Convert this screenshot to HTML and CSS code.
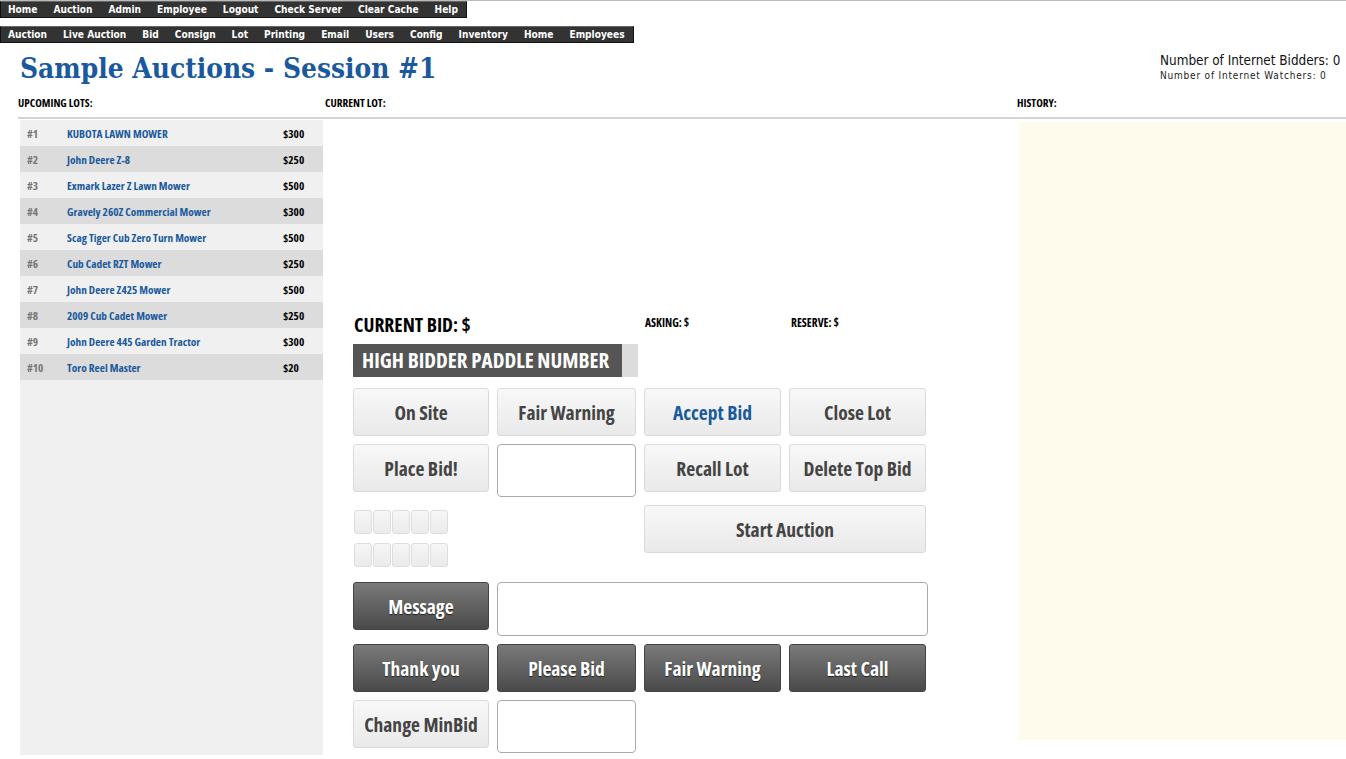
FILE: index.html
```html
<!DOCTYPE html>
<html>
<head>
<meta charset="utf-8">
<link rel="stylesheet" href="styles.css">
</head>
<body>
<div class="topline"></div>
<nav class="menu menu1">
  <a>Home</a><a>Auction</a><a>Admin</a><a>Employee</a><a>Logout</a><a>Check Server</a><a>Clear Cache</a><a>Help</a>
</nav>
<nav class="menu menu2">
  <a>Auction</a><a>Live Auction</a><a>Bid</a><a>Consign</a><a>Lot</a><a>Printing</a><a>Email</a><a>Users</a><a>Config</a><a>Inventory</a><a>Home</a><a>Employees</a>
</nav>
<header class="head">
  <h1 class="title">Sample Auctions - Session #1</h1>
  <div class="stats">
    <div class="bidders">Number of Internet Bidders: 0</div>
    <div class="watchers">Number of Internet Watchers: 0</div>
  </div>
</header>
<div class="labels">
  <div class="lbl lbl-left">UPCOMING LOTS:</div>
  <div class="lbl lbl-mid">CURRENT LOT:</div>
  <div class="lbl lbl-right">HISTORY:</div>
</div>
<main class="cols">
  <section class="lots">
    <div class="lot"><span class="num">#1</span><span class="name">KUBOTA LAWN MOWER</span><span class="price">$300</span></div>
    <div class="lot"><span class="num">#2</span><span class="name">John Deere Z-8</span><span class="price">$250</span></div>
    <div class="lot"><span class="num">#3</span><span class="name">Exmark Lazer Z Lawn Mower</span><span class="price">$500</span></div>
    <div class="lot"><span class="num">#4</span><span class="name">Gravely 260Z Commercial Mower</span><span class="price">$300</span></div>
    <div class="lot"><span class="num">#5</span><span class="name">Scag Tiger Cub Zero Turn Mower</span><span class="price">$500</span></div>
    <div class="lot"><span class="num">#6</span><span class="name">Cub Cadet RZT Mower</span><span class="price">$250</span></div>
    <div class="lot"><span class="num">#7</span><span class="name">John Deere Z425 Mower</span><span class="price">$500</span></div>
    <div class="lot"><span class="num">#8</span><span class="name">2009 Cub Cadet Mower</span><span class="price">$250</span></div>
    <div class="lot"><span class="num">#9</span><span class="name">John Deere 445 Garden Tractor</span><span class="price">$300</span></div>
    <div class="lot"><span class="num">#10</span><span class="name">Toro Reel Master</span><span class="price">$20</span></div>
  </section>
  <section class="current">
    <div class="lotview"></div>
    <div class="bidline">
      <div class="curbid">CURRENT BID: $</div>
      <div class="small asking">ASKING: $</div>
      <div class="small reserve">RESERVE: $</div>
    </div>
    <div class="paddle"><span class="paddle-txt">HIGH BIDDER PADDLE NUMBER</span></div>
    <div class="grid">
      <button class="btn">On Site</button>
      <button class="btn">Fair Warning</button>
      <button class="btn blue">Accept Bid</button>
      <button class="btn">Close Lot</button>

      <button class="btn">Place Bid!</button>
      <input class="field" type="text">
      <button class="btn">Recall Lot</button>
      <button class="btn">Delete Top Bid</button>

      <div class="keys">
        <div class="keyrow"><span class="key"></span><span class="key"></span><span class="key"></span><span class="key"></span><span class="key"></span></div>
        <div class="keyrow"><span class="key"></span><span class="key"></span><span class="key"></span><span class="key"></span><span class="key"></span></div>
      </div>
      <button class="btn span2">Start Auction</button>

      <button class="btn dark">Message</button>
      <input class="field msg" type="text">

      <button class="btn dark">Thank you</button>
      <button class="btn dark">Please Bid</button>
      <button class="btn dark">Fair Warning</button>
      <button class="btn dark">Last Call</button>

      <button class="btn">Change MinBid</button>
      <input class="field" type="text">
    </div>
  </section>
  <section class="history"></section>
</main>
</body>
</html>
```

FILE: styles.css
```css
html, body {
  margin: 0;
  padding: 0;
  background: #fff;
}
body {
  font-family: "Open Sans", "DejaVu Sans", sans-serif;
  width: 1346px;
  overflow: hidden;
}
.topline {
  height: 1px;
  background: #bbb;
}
.menu {
  display: flex;
  background: #333;
  border: 1px solid #111;
  border-top-color: #666;
  box-sizing: border-box;
  height: 17px;
  align-items: center;
}
.menu a {
  font-family: "DejaVu Sans Condensed", "DejaVu Sans", sans-serif;
  font-stretch: semi-condensed;
  font-weight: bold;
  font-size: 10.1px;
  color: #fff;
  padding: 0 8px;
  line-height: 15px;
  white-space: nowrap;
}
.menu a:first-child {
  padding-left: 7px;
}
.menu1 {
  width: 467px;
}
.menu2 {
  width: 634px;
  margin-top: 8px;
}
.head {
  display: flex;
  justify-content: space-between;
  align-items: flex-start;
  height: 49px;
}
.title {
  margin: 9px 0 0 20px;
  font-family: "DejaVu Serif Condensed", "DejaVu Serif", serif;
  font-stretch: condensed;
  font-weight: bold;
  font-size: 27.8px;
  line-height: 34px;
  color: #1a5a9c;
}
.stats {
  margin: 10px 5px 0 0;
  width: 181px;
  font-family: "DejaVu Sans Condensed", "DejaVu Sans", sans-serif;
  font-stretch: semi-condensed;
  color: #111;
}
.bidders {
  font-size: 13.4px;
  line-height: 16px;
  white-space: nowrap;
}
.watchers {
  font-size: 10px;
  line-height: 14px;
  letter-spacing: 0.8px;
  color: #222;
  white-space: nowrap;
}
.labels {
  display: flex;
  margin-left: 18px;
  height: 27px;
  border-bottom: 2px solid #d4d4d4;
  box-sizing: border-box;
}
.lbl {
  font-family: "Open Sans", sans-serif;
  font-stretch: 75%;
  font-weight: bold;
  font-size: 11.2px;
  line-height: 16px;
  padding-top: 3px;
  color: #000;
}
.lbl-left { width: 307px; }
.lbl-mid { width: 692px; }
.cols {
  display: flex;
  margin-left: 20px;
  align-items: flex-start;
}
.lots {
  width: 303px;
  height: 635px;
  margin-top: 1px;
  background: #f0f0f0;
}
.lot {
  display: flex;
  height: 26px;
  align-items: center;
  font-family: "Open Sans", sans-serif;
  font-stretch: 75%;
  font-weight: bold;
  font-size: 11.3px;
  background: #f0f0f0;
}
.lot:nth-child(even) {
  background: #dcdcdc;
}
.num {
  width: 47px;
  padding-left: 7px;
  color: #777;
  box-sizing: border-box;
}
.name {
  width: 216px;
  color: #1a5a9c;
}
.price {
  color: #000;
}
.current {
  width: 696px;
  padding-left: 30px;
  box-sizing: border-box;
}
.lotview {
  height: 192px;
}
.bidline {
  display: flex;
  align-items: baseline;
  height: 33px;
}
.curbid {
  font-family: "Open Sans", sans-serif;
  font-stretch: 75%;
  font-weight: bold;
  font-size: 19.5px;
  width: 291px;
  padding-left: 1px;
  color: #000;
}
.small {
  font-family: "Open Sans", sans-serif;
  font-stretch: 75%;
  font-weight: bold;
  font-size: 11.5px;
  color: #000;
  position: relative;
  top: -5px;
}
.asking { width: 146px; }
.paddle {
  width: 285px;
  height: 33px;
  background: #dcdcdc;
  display: flex;
}
.paddle-txt {
  background: #555;
  color: #fff;
  font-family: "Open Sans", sans-serif;
  font-stretch: 75%;
  font-weight: bold;
  font-size: 21px;
  line-height: 33px;
  padding: 0 0 0 9px;
  width: 269px;
  box-sizing: border-box;
  white-space: nowrap;
}
.grid {
  display: grid;
  grid-template-columns: 136px 139px 137px 137px;
  column-gap: 8px;
  row-gap: 8px;
  margin-top: 11px;
  align-items: start;
}
.btn {
  height: 48px;
  border: 1px solid #dadada;
  border-radius: 3px;
  background: linear-gradient(#f8f8f8, #e9e9e9);
  color: #444;
  font-family: "Open Sans", sans-serif;
  font-stretch: 75%;
  font-weight: bold;
  font-size: 19.5px;
  padding: 0;
  margin: 0;
  cursor: pointer;
}
.btn.blue { color: #1a5a9c; }
.btn.dark {
  background: linear-gradient(#7a7a7a, #4a4a4a);
  border-color: #444;
  color: #fff;
  text-shadow: 0 1px 1px #222;
}
.field {
  height: 53px;
  border: 1px solid #aaa;
  border-radius: 4px;
  background: #fff;
  box-sizing: border-box;
  margin: 0;
  padding: 0;
  width: 100%;
}
.msg {
  grid-column: 2 / 5;
  width: 431px;
  height: 54px;
}
.span2 {
  grid-column: 3 / 5;
}
.keys {
  grid-column: 1 / 3;
  height: 69px;
  box-sizing: border-box;
  padding-top: 5px;
  padding-left: 1px;
}
.keyrow {
  display: flex;
  gap: 1px;
}
.keyrow + .keyrow {
  margin-top: 9px;
}
.key {
  width: 18px;
  height: 24px;
  border: 1px solid #ddd;
  border-radius: 3px;
  box-sizing: border-box;
  background: linear-gradient(#f6f6f6, #ebebeb);
}
.history {
  width: 327px;
  height: 618px;
  margin-top: 3px;
  background: #fffbec;
}
```
